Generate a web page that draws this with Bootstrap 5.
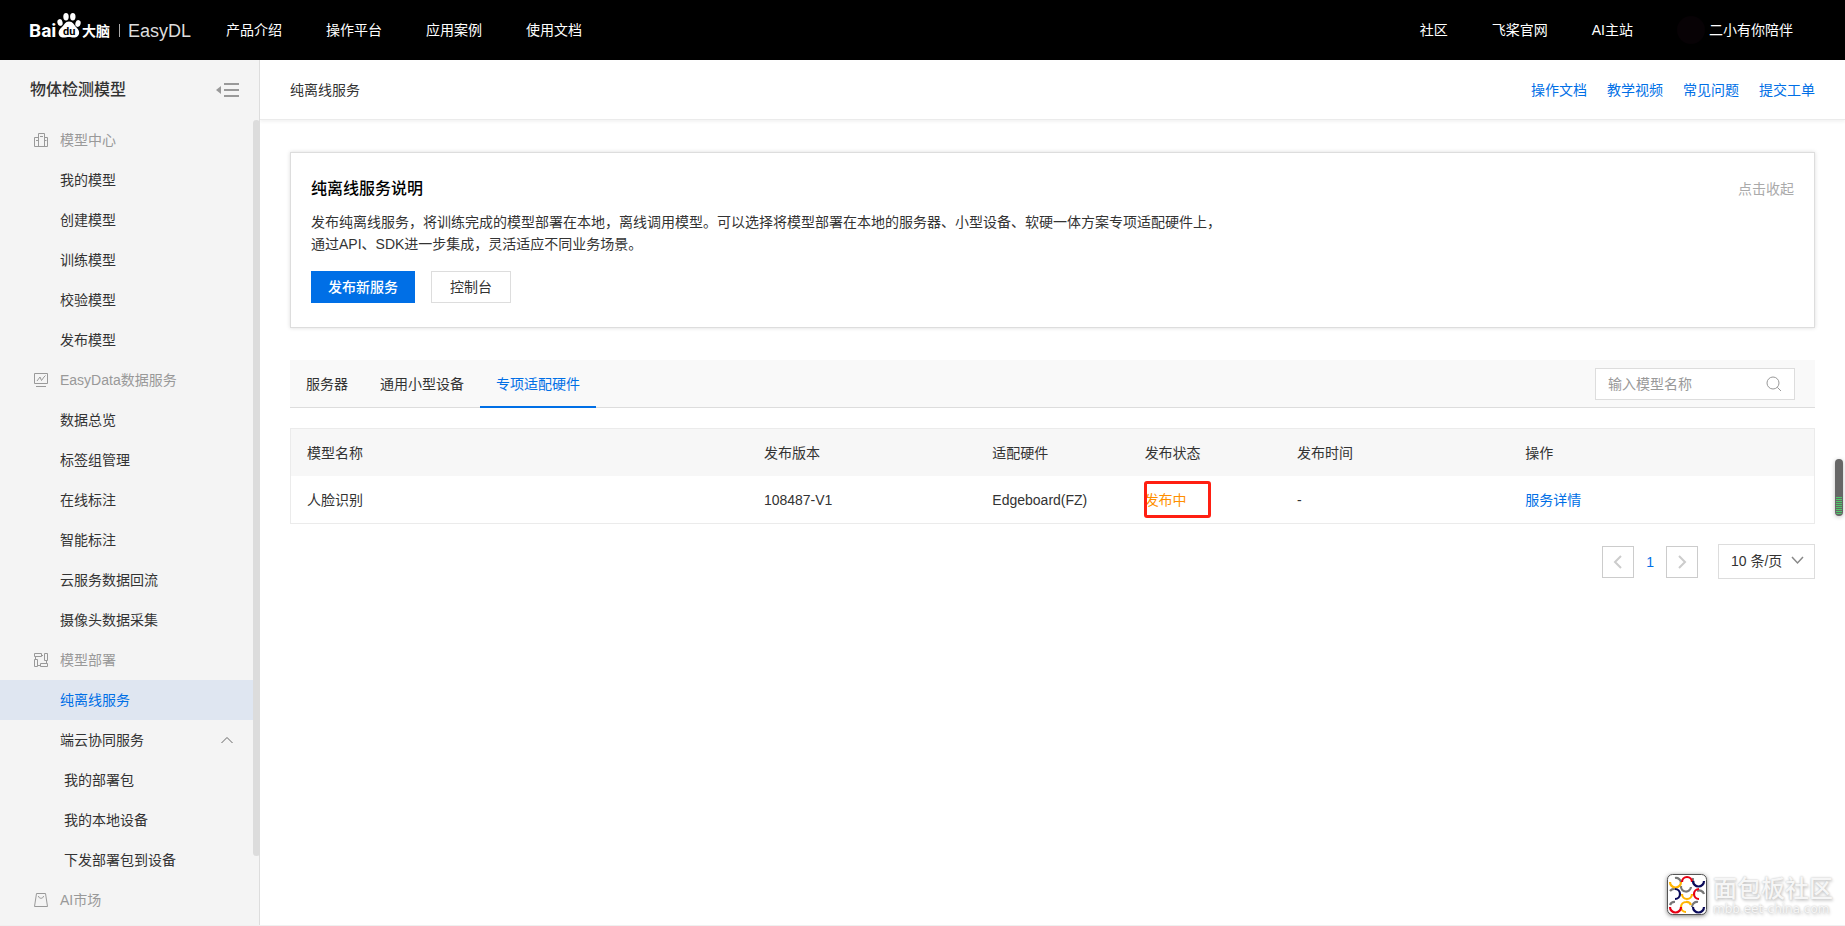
<!DOCTYPE html>
<html lang="zh-CN">
<head>
<meta charset="utf-8">
<meta name="viewport" content="width=device-width, initial-scale=1">
<title>EasyDL 纯离线服务</title>
<link href="https://cdn.jsdelivr.net/npm/bootstrap@5.3.0/dist/css/bootstrap.min.css" rel="stylesheet">
<style>
  :root { --brand: #006fe6; --line: #ddd; --soft: #ebebeb; }
  body { font-family: "Liberation Sans", "Noto Sans CJK SC", sans-serif; font-size: 14px; line-height: 22px; color: #333; background: #fff; border-bottom: 1px solid #f0f0f0; }
  a { text-decoration: none; color: var(--brand); }
  svg { display: block; flex: none; }
  .topbar { background: #000; height: 60px; padding: 0 52px 0 30px; }
  .topbar a { color: #fff; }
  .topbar .main-links { gap: 44px; margin-left: 32px; }
  .topbar .brand-mark { overflow: visible; }
  .avatar { width: 28px; height: 28px; background: #070205; }
  .side { width: 260px; background: #f4f4f4; border-right: 1px solid var(--line); }
  .side-head { height: 60px; padding: 0 20px 0 30px; }
  .side-head h1 { font-size: 16px; line-height: 24px; font-weight: 500; margin: 0; }
  .plain { background: none; border: 0; padding: 0; }
  .side-list > * { height: 40px; display: flex; align-items: center; padding-left: 60px; margin-right: 6px; color: #333; }
  .side-list .group { color: #999; padding-left: 34px; gap: 12px; }
  .side-list .sub { padding-left: 64px; }
  .side-list .active { background: #dfe6f1; color: var(--brand); }
  .side-list .parent { padding-right: 20px; justify-content: space-between; text-align: left; }
  .thumb { top: 60px; right: -1px; bottom: 69px; width: 7px; border-radius: 4px; background: #dcdcdc; }
  .crumb { height: 60px; padding: 0 30px; border-bottom: 1px solid var(--soft); box-shadow: 0 2px 3px rgba(0,0,0,.05); }
  .content { padding: 32px 30px; }
  .intro { border: 1px solid var(--line); box-shadow: 0 0 4px rgba(0,0,0,.14); padding: 24px 20px; margin-bottom: 32px; }
  .intro h2 { font-size: 16px; line-height: 24px; font-weight: 500; color: #000; margin: 0 0 10px; }
  .intro p { max-width: 910px; margin: 0 0 16px; }
  .intro .muted { color: #aaa; line-height: 24px; }
  .act { --bs-btn-font-size: 14px; --bs-btn-line-height: 22px; --bs-btn-padding-y: 4px; --bs-btn-padding-x: 16px; --bs-btn-border-radius: 0; }
  .act-main { --bs-btn-bg: var(--brand); --bs-btn-border-color: var(--brand); --bs-btn-color: #fff; font-weight: 500; }
  .act-line { --bs-btn-bg: #fff; --bs-btn-border-color: #ddd; --bs-btn-color: #333; --bs-btn-padding-x: 18px; }
  .tabbar { height: 48px; background: #f9f9f9; border-bottom: 1px solid var(--line); padding-right: 20px; margin-bottom: 20px; }
  .tabbar .tab { color: #333; height: 48px; line-height: 48px; padding: 0 16px; border-bottom: 2px solid transparent; }
  .tabbar .tab.active { color: var(--brand); border-color: var(--brand); }
  .search { width: 200px; height: 32px; border: 1px solid var(--line); background: #fff; padding: 0 12px; }
  .search input { border: 0; outline: 0; padding: 0; min-width: 0; background: none; line-height: 20px; }
  .search input::placeholder { color: #999; opacity: 1; }
  .grid-table { table-layout: fixed; border-collapse: separate; border-spacing: 0; border: 1px solid var(--soft); width: 100%; margin: 0 0 20px; }
  .grid-table th, .grid-table td { height: 47px; padding: 0 16px; font-weight: 400; vertical-align: middle; border: 0; }
  .grid-table thead { background: #f7f7f7; }
  .w10 { width: 10%; } .w15 { width: 15%; } .w20 { width: 20%; } .w30 { width: 30%; }
  .state { color: #ff8f00; }
  .marker { left: -1px; top: -8px; width: 67px; height: 37px; border: 3px solid #ff1f12; border-radius: 3px; pointer-events: none; }
  .pager button { width: 32px; height: 32px; border: 1px solid #ccc; background: #fff; padding: 0; display: flex; align-items: center; justify-content: center; }
  .size-box { width: 97px; height: 35px; margin-left: 20px; }
  .size-box select { appearance: none; width: 100%; height: 100%; border: 1px solid var(--line); background: #fff; color: #333; padding: 0 30px 2px 12px; }
  .size-box svg { right: 11px; top: 12px; pointer-events: none; }
  .gauge { right: 2px; top: 459px; width: 8px; height: 57px; border-radius: 4px; background: #666; box-shadow: 0 1px 4px rgba(0,0,0,.25); padding: 38px 1px 1px; z-index: 5; }
  .gauge span { height: 100%; border-radius: 0 0 4px 4px; background: repeating-linear-gradient(#4ec96a 0 1px, #666 1px 2px); }
  .stamp { right: 12px; bottom: 10px; gap: 6px; color: #f6f6f6; pointer-events: none; }
  .stamp svg { filter: drop-shadow(0 1px 2px rgba(0,0,0,.5)); }
  .stamp-text { text-shadow: 0 0 2px #bbb, 1px 2px 3px #ccc; }
  .stamp-name { font-size: 24px; line-height: 28px; font-weight: 500; }
  .stamp-url { font-family: "DejaVu Sans", sans-serif; font-size: 12px; line-height: 12px; }
</style>
</head>
<body class="min-vh-100 d-flex flex-column position-relative">
<header class="topbar d-flex align-items-center">
  <a href="#" aria-label="Baidu 大脑 EasyDL">
    <svg class="brand-mark" width="164" height="44" viewBox="0 0 164 44" fill="#fff">
      <text x="-1" y="29" font-family="Roboto, sans-serif" font-weight="700" font-size="19">Bai</text>
      <ellipse cx="30" cy="14.500" rx="2.600" ry="3.400" transform="rotate(-12 30 14.500)"/>
      <ellipse cx="36" cy="8.700" rx="2.700" ry="3.700"/>
      <ellipse cx="42.800" cy="8.700" rx="2.700" ry="3.700"/>
      <ellipse cx="48" cy="15.500" rx="2.600" ry="3.400" transform="rotate(15 48 15.500)"/>
      <path d="M39 13.500c4 0 5 3.500 7.500 6 4 3.500 3.500 9-1.500 10-3 .4-4-.5-6-.5s-4 .9-6.500.5c-5-1-5-7-1-10C34.500 17 35 13.500 39 13.500z"/>
      <text x="33" y="27" font-family="Roboto, sans-serif" font-weight="700" font-size="11" style="fill:#000">du</text>
      <text x="52" y="28" font-family="Noto Sans CJK SC, sans-serif" font-weight="700" font-size="14">大脑</text>
      <path fill="#aaa" d="M89 16h1v13h-1z"/>
      <text x="98" y="29" font-family="Liberation Sans, sans-serif" font-size="18" style="fill:#ddd">EasyDL</text>
    </svg>
  </a>
  <nav class="main-links d-flex">
    <a href="#">产品介绍</a><a href="#">操作平台</a><a href="#">应用案例</a><a href="#">使用文档</a>
  </nav>
  <nav class="d-flex align-items-center ms-auto" style="gap:44px">
    <a href="#">社区</a><a href="#">飞桨官网</a><a href="#">AI主站</a>
    <a href="#" class="d-flex align-items-center gap-1"><span class="avatar rounded-circle"></span>二小有你陪伴</a>
  </nav>
</header>

<div class="d-flex flex-grow-1">
  <aside class="side position-relative flex-shrink-0">
    <div class="side-head d-flex align-items-center justify-content-between">
      <h1>物体检测模型</h1>
      <button class="plain" type="button" aria-label="收起菜单">
        <svg width="23" height="14" viewBox="0 0 23 14" fill="#999"><path d="M5 3v8L0 7zM8 0h15v2H8zM8 6h15v2H8zM8 12h15v2H8z"/></svg>
      </button>
    </div>
    <nav class="side-list">
      <div class="group"><svg width="14" height="14" viewBox="0 0 14 14" fill="none" stroke="#999"><path d="M4.500 13.500v-13h6v13M4.500 4.500h-4v9h13v-9h-3M2 7.500h2M10.500 7.500h2M6 3.500h3"/></svg>模型中心</div>
      <a href="#">我的模型</a><a href="#">创建模型</a><a href="#">训练模型</a><a href="#">校验模型</a><a href="#">发布模型</a>
      <div class="group"><svg width="14" height="14" viewBox="0 0 14 14" fill="none" stroke="#999"><path d="M.5.500h13v10H.5zM2 13.500h10M3 8l3-4 1.500 3.500L10 4l1.500-1.500"/></svg>EasyData数据服务</div>
      <a href="#">数据总览</a><a href="#">标签组管理</a><a href="#">在线标注</a><a href="#">智能标注</a><a href="#">云服务数据回流</a><a href="#">摄像头数据采集</a>
      <div class="group"><svg width="14" height="14" viewBox="0 0 14 14" fill="none" stroke="#999"><path d="M.5.500h7v3h-7zM10.500.500h3v7h-3zM.5 6.500h3v7h-3zM6.500 10.500h7v3h-7zM7.500 2.500H9M1.500 3.500v3M12.500 7.500v3M4 12.500h2.500"/></svg>模型部署</div>
      <a href="#" class="active" aria-current="page">纯离线服务</a>
      <a href="#" class="parent">端云协同服务<svg width="12" height="8" viewBox="0 0 12 8" fill="none" stroke="#666"><path d="M.5 7 6 1.500 11.500 7"/></svg></a>
      <a href="#" class="sub">我的部署包</a><a href="#" class="sub">我的本地设备</a><a href="#" class="sub">下发部署包到设备</a>
      <div class="group"><svg width="14" height="14" viewBox="0 0 14 14" fill="none" stroke="#999"><path d="M2.500.500h9l2 13H.5zM4.500 3c0 3 5 3 5 0"/></svg>AI市场</div>
    </nav>
    <div class="thumb position-absolute"></div>
  </aside>

  <main class="flex-grow-1">
    <div class="crumb d-flex align-items-center justify-content-between">
      <span>纯离线服务</span>
      <nav class="d-flex" style="gap:20px"><a href="#">操作文档</a><a href="#">教学视频</a><a href="#">常见问题</a><a href="#">提交工单</a></nav>
    </div>
    <div class="content">
      <section class="intro">
        <div class="d-flex justify-content-between">
          <h2>纯离线服务说明</h2>
          <button class="plain muted align-self-start" type="button">点击收起</button>
        </div>
        <p>发布纯离线服务，将训练完成的模型部署在本地，离线调用模型。可以选择将模型部署在本地的服务器、小型设备、软硬一体方案专项适配硬件上，<br>通过API、SDK进一步集成，灵活适应不同业务场景。</p>
        <div class="d-flex gap-3">
          <button class="btn act act-main" type="button">发布新服务</button>
          <button class="btn act act-line" type="button">控制台</button>
        </div>
      </section>

      <div class="tabbar d-flex align-items-center justify-content-between">
        <nav class="d-flex">
          <a href="#" class="tab">服务器</a><a href="#" class="tab">通用小型设备</a><a href="#" class="tab active">专项适配硬件</a>
        </nav>
        <label class="search d-flex align-items-center">
          <input class="flex-grow-1" type="text" placeholder="输入模型名称" aria-label="输入模型名称">
          <svg width="16" height="16" viewBox="0 0 16 16" fill="none" stroke="#999"><circle cx="7" cy="7" r="6"/><path d="m11.300 11.300 3.700 3.700"/></svg>
        </label>
      </div>

      <table class="grid-table">
        <thead><tr><th class="w30">模型名称</th><th class="w15">发布版本</th><th class="w10">适配硬件</th><th class="w10">发布状态</th><th class="w15">发布时间</th><th class="w20">操作</th></tr></thead>
        <tbody><tr><td>人脸识别</td><td>108487-V1</td><td>Edgeboard(FZ)</td><td><span class="state position-relative d-inline-block">发布中<span class="marker position-absolute"></span></span></td><td>-</td><td><a href="#">服务详情</a></td></tr></tbody>
      </table>

      <div class="pager d-flex align-items-center justify-content-end">
        <button type="button" aria-label="上一页"><svg width="10" height="14" viewBox="0 0 10 14" fill="none" stroke="#ccc" stroke-width="2"><path d="M8 1 2 7l6 6"/></svg></button>
        <a href="#" class="px-2 mx-1">1</a>
        <button type="button" aria-label="下一页"><svg width="10" height="14" viewBox="0 0 10 14" fill="none" stroke="#ccc" stroke-width="2"><path d="m2 1 6 6-6 6"/></svg></button>
        <div class="size-box position-relative">
          <select aria-label="每页条数"><option>10 条/页</option><option>20 条/页</option></select>
          <svg class="position-absolute" width="13" height="9" viewBox="0 0 13 9" fill="none" stroke="#888" stroke-width="1.500"><path d="m1 1 5.500 6L12 1"/></svg>
        </div>
      </div>
    </div>
  </main>
</div>

<div class="gauge position-absolute"><span class="d-block"></span></div>

<div class="stamp position-absolute d-flex align-items-center">
  <svg width="40" height="41" viewBox="0 0 40 41" fill="none" stroke-width="2.200">
    <rect x=".5" y=".5" width="39" height="40" rx="5" fill="#fff" stroke="#555" stroke-width="1"/>
    <path stroke="#777" d="M8 4a5 5 0 0 1 6 5M27 9a5 5 0 0 1-1-5M3 17a5 5 0 0 1 5-2M30 17a5 5 0 0 1 7 3M3 31a5 5 0 0 1 5-3M14 12a5 5 0 0 0 10 1M25 33a5 5 0 0 1 6-5"/>
    <path stroke="#ffb400" d="M3 8a5 5 0 0 0 11 0M15 20a5 5 0 0 0 10 0M19 38a5 5 0 0 1 0-10 5 5 0 0 1 5 3"/>
    <path stroke="#e60012" d="M15 8a5 5 0 0 1 10 0M32 25a5 5 0 0 1 0-10M3 33a5 5 0 0 0 11 0"/>
    <path stroke="#0a0a5a" d="M26 7a5 5 0 0 0 11 0M8 15a5 5 0 0 1 0 10M26 33a5 5 0 0 0 11 0"/>
  </svg>
  <div class="stamp-text"><div class="stamp-name">面包板社区</div><div class="stamp-url">mbb.eet-china.com</div></div>
</div>
<script src="https://cdn.jsdelivr.net/npm/bootstrap@5.3.0/dist/js/bootstrap.bundle.min.js"></script>
</body>
</html>
